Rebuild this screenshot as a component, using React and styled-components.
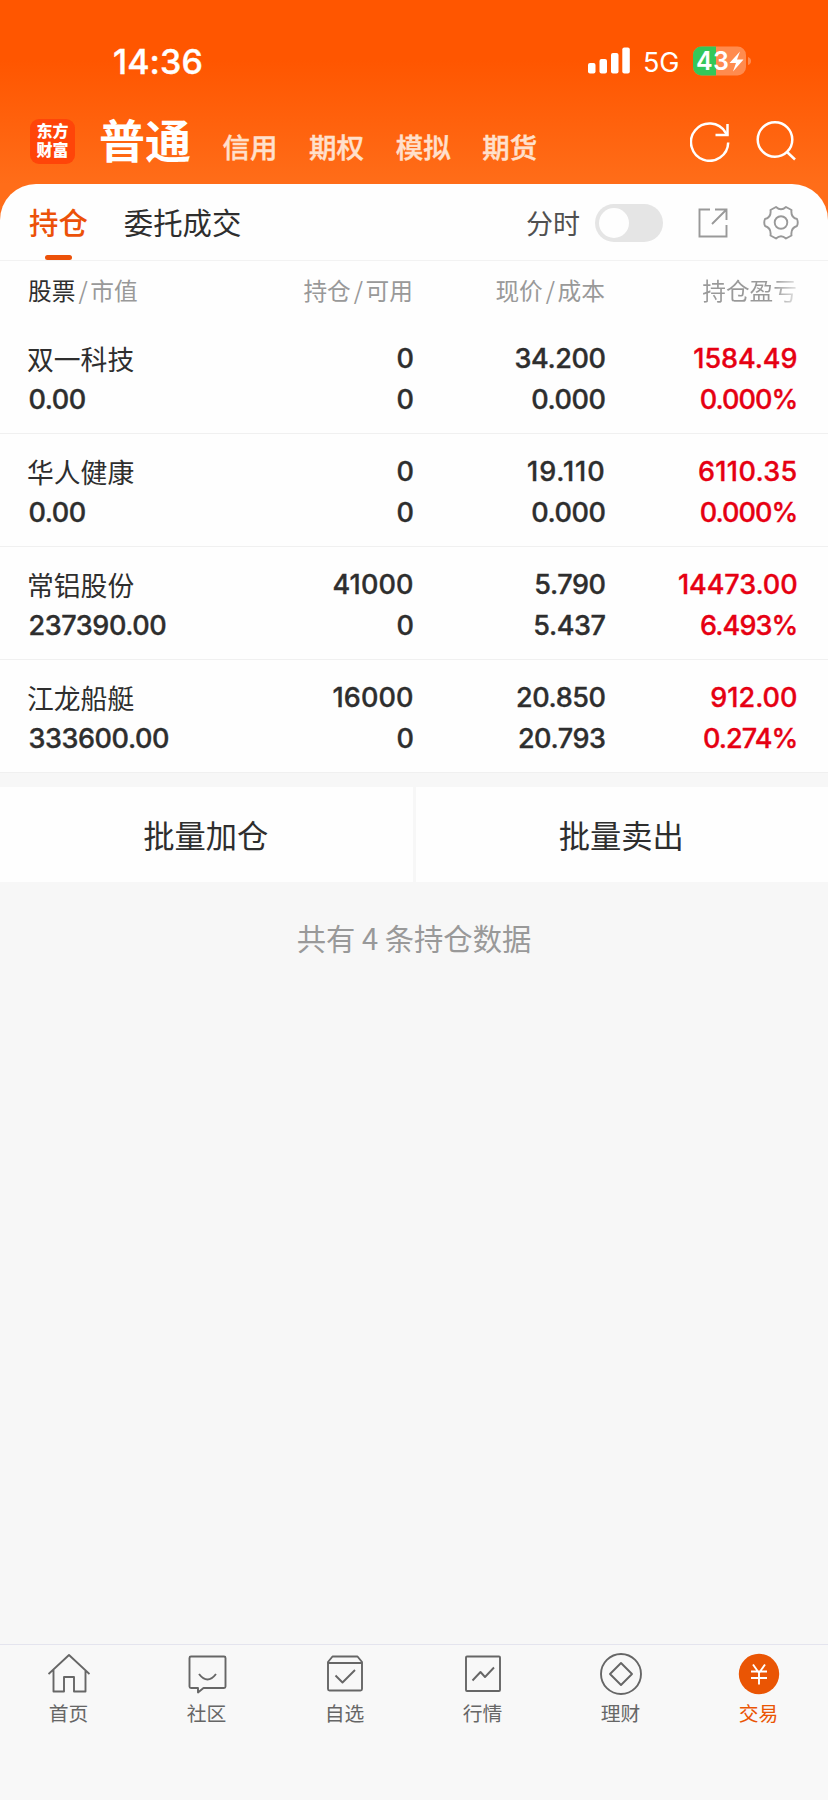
import React from 'react';
import styled, { createGlobalStyle } from 'styled-components';

const GlobalStyle = createGlobalStyle`
  * { box-sizing: border-box; }
  body { margin: 0; background: #f7f7f8; }
  #root { font-family: "Noto Sans CJK SC", sans-serif; color: #2e2e2e; }
`;

const Screen = styled.div`
  width: 828px;
  height: 1800px;
  display: flex;
  flex-direction: column;
  overflow: hidden;
  background: #f7f7f7;
`;

const Hero = styled.header`
  height: 230px;
  flex: none;
  background: linear-gradient(#ff5600 0, #ff5600 60px, #ff6d19 184px);
`;

const StatusBar = styled.div`
  height: 104px;
  padding: 17px 77px 0 113px;
  display: flex;
  align-items: center;
  color: #fff;
  font-family: Inter, sans-serif;
`;

const Clock = styled.div`
  flex: 1;
  padding-top: 2px;
  font-size: 34px;
  font-weight: 500;
  letter-spacing: 0.1px;
  -webkit-text-stroke: 0.4px currentColor;
`;

const Network = styled.div`
  margin: 4px 14px 0 12px;
  font-size: 27px;
  letter-spacing: -0.3px;
`;

const AccountBar = styled.nav`
  height: 80px;
  padding: 0 32px 0 30px;
  display: flex;
  align-items: center;
  color: #fff;
`;

const Logo = styled.div`
  width: 45px;
  height: 45px;
  margin: -5px 24px 0 0;
  padding-top: 3px;
  border-radius: 9px;
  background: #ff4509;
  font: 900 16px/19px "Liberation Sans", "Noto Sans CJK SC", sans-serif;
  text-align: center;
`;

const Account = styled.div`
  font-size: ${p => (p.$current ? '46px' : '27.5px')};
  line-height: 60px;
  font-weight: ${p => (p.$current ? 700 : 500)};
  color: ${p => (p.$current ? '#fff' : '#ffe0cc')};
  margin: ${p => (p.$current ? '-13px 31.5px 0 0' : '4px 31.6px 0 0')};
  ${p => !p.$current && '-webkit-text-stroke: 0.4px currentColor;'}
`;

const HeroActions = styled.div`
  display: flex;
  gap: 26px;
  margin: -6px 0 0 auto;
`;

const Panel = styled.main`
  flex: none;
  margin-top: -46px;
  border-radius: 36px 36px 0 0;
  background: #fefefe;
`;

const TabBar = styled.div`
  height: 77px;
  padding: 0 29px;
  display: flex;
  align-items: stretch;
  border-bottom: 1px solid #f2f2f2;
`;

const Tab = styled.div`
  margin-right: 36px;
  display: flex;
  flex-direction: column;
  align-items: center;
  font-size: 29.4px;
  line-height: 44px;
  padding-top: 15px;
  font-weight: ${p => (p.$active ? 500 : 400)};
  color: ${p => (p.$active ? '#ec5109' : '#2e2e2e')};
`;

const TabMark = styled.span`
  width: 27px;
  height: 5px;
  margin-top: auto;
  border-radius: 2.5px;
  background: #ec5109;
`;

const Tools = styled.div`
  margin-left: auto;
  padding-top: 2px;
  display: flex;
  align-items: center;
  color: #505050;
  font-size: 27px;
`;

const ToolLabel = styled.span`
  margin: -1px 0 0 -1px;
`;

const GearButton = styled.div`
  display: flex;
  margin-left: 35px;
`;

const Switch = styled.div`
  width: 68px;
  height: 38px;
  margin: 0 35px 0 15px;
  padding: 4px;
  border-radius: 19px;
  background: #e5e5e5;
  &::before {
    content: "";
    display: block;
    width: 30px;
    height: 30px;
    border-radius: 50%;
    background: #fefefe;
  }
`;

const Columns = styled.div`
  display: grid;
  grid-template-columns: 201px 184px 192px 192px;
  padding: 0 31px 0 28px;
`;

const HeadRow = styled(Columns)`
  height: 60px;
  line-height: 58px;
  font-size: 23.7px;
  color: #999;
`;

const HeadCell = styled.div`
  text-align: ${p => (p.$left ? 'left' : 'right')};
  white-space: nowrap;
  ${p => p.$fade && `
    color: transparent;
    background: linear-gradient(90deg, #999 168px, #e4e4e4 192px);
    background-clip: text;
  `}
`;

const Strong = styled.span`
  color: #2e2e2e;
`;

const Slash = styled.span`
  margin: 0 2.5px 0 3px;
`;

const Row = styled(Columns)`
  height: 113px;
  padding-top: 17px;
  border-bottom: 1px solid #f0f0f0;
`;

const Cell = styled.div`
  display: flex;
  flex-direction: column;
  align-items: ${p => (p.$left ? 'flex-start' : 'flex-end')};
  color: ${p => (p.$gain ? '#e60012' : '#2e2e2e')};
  font: 500 27px/41px Inter, sans-serif;
`;

const Figure = styled.span`
  margin: 0 -0.5px 0 0.5px;
  letter-spacing: ${p => p.$tracking}px;
  -webkit-text-stroke: 0.35px currentColor;
`;

const StockName = styled.div`
  font: 400 26.8px/41px "Noto Sans CJK SC", sans-serif;
  margin-left: -1px;
`;

const Actions = styled.div`
  display: flex;
  gap: 3px;
  padding-top: 14px;
  background: #f7f7f7;
`;

const Action = styled.div`
  flex: 1;
  height: 95px;
  padding-right: 1px;
  line-height: 96px;
  text-align: center;
  font-size: 31.3px;
  background: #fefefe;
`;

const Summary = styled.div`
  padding-top: 32px;
  text-align: center;
  font-size: 29.3px;
  line-height: 46px;
  color: #999;
`;

const BottomNav = styled.nav`
  height: 156px;
  margin-top: auto;
  display: flex;
  border-top: 1px solid #e4e4ee;
  background: #f8f8f8;
`;

const NavItem = styled.div`
  flex: 1;
  padding-top: 8px;
  display: flex;
  flex-direction: column;
  align-items: center;
  font-size: 19.8px;
  line-height: 35px;
  color: ${p => (p.$active ? '#ea5504' : '#666')};
`;

const NavLabel = styled.span`
  padding-right: 1px;
`;

const Signal = () => (
  <svg width="43" height="27" fill="#fff">
    <rect x="0" y="16" width="7.5" height="10.5" rx="2" />
    <rect x="11.5" y="12" width="7.5" height="14.5" rx="2" />
    <rect x="23" y="6" width="7.5" height="20.5" rx="2" />
    <rect x="34.3" y="0.5" width="7.5" height="26" rx="2" />
  </svg>
);

const Battery = () => (
  <svg width="58" height="30" viewBox="0 0 58 30">
    <defs><clipPath id="charge"><rect width="23" height="30" /></clipPath></defs>
    <rect x="0" y="0.5" width="53" height="29" rx="8.5" fill="#ff8b4e" />
    <rect x="0" y="0.5" width="53" height="29" rx="8.5" fill="#34c759" clipPath="url(#charge)" />
    <path d="M55 11q3 1 3 4t-3 4z" fill="#ff8b4e" />
    <text x="3" y="24" fontFamily="Inter" fontSize="25" fontWeight="600" fill="#fff" textLength="33">43</text>
    <path d="M47 5.500L36.500 17h6.500l-3 8.500L50.500 13.500h-6.500z" fill="#fff" />
  </svg>
);

const RefreshIcon = () => (
  <svg width="40" height="42" fill="none" stroke="#fff" strokeWidth="2.5">
    <path d="M38.2 22.5A18.6 18.6 0 1 1 35.500 12.500L37.500 15" />
    <path d="M37.500 4v11H25.5" />
  </svg>
);

const SearchIcon = () => (
  <svg width="40" height="42" fill="none" stroke="#fff" strokeWidth="2.5">
    <circle cx="19" cy="19.500" r="17.3" />
    <path d="M30.5 31.500L39 39.5" />
  </svg>
);

const ShareIcon = () => (
  <svg width="30" height="30" fill="none" stroke="#999" strokeWidth="1.9">
    <path d="M12 1.5H1.5v27h27V17M17 1.5h11.5V12M28 2L14 16" />
  </svg>
);

const GearIcon = () => (
  <svg width="36" height="34" viewBox="-1 0 36 34" fill="none" stroke="#999" strokeWidth="1.9" strokeLinejoin="round">
    <path d="M12 1Q17 5.500 22 1L27.500 4Q26.500 11.500 33 13Q34.500 16.500 33 20Q26.500 22 27.500 29.500L22 32.500Q17 28 12 32.500L6.500 29.500Q7.500 22 1 20Q-0.500 16.500 1 13Q7.500 11.500 6.500 4Z" />
    <circle cx="17" cy="16.500" r="6.3" />
  </svg>
);

const navIcons = {
  home: <><path d="M0 20.500L20.500 1.500l20.500 19M5 16.500v21.500h10.500V23.500h10v14.500H37V16.500" /></>,
  community: <><path d="M3 4.500q0-1.500 1.500-1.500h33q1.500 0 1.500 1.500v28.500q0 1.500-1.500 1.500H17l-5.500 4.500v-4.500h-7Q3 34.500 3 33z" /><path d="M12.500 20.500q8.500 11 17 0" /></>,
  watch: <><path d="M3.500 8.500L8 3h25l4.500 5.500v27q0 1.500-1.500 1.500H5q-1.500 0-1.500-1.500zM4 9.500h33" /><path d="M11 22l7 7L30.500 16.500" /></>,
  market: <><rect x="3.500" y="3" width="34" height="34.500" rx="1" /><path d="M10 27l8-8.500 4.500 5L31.500 14" /></>,
  wealth: <><circle cx="20.500" cy="20.500" r="20" /><path d="M20.500 9.500l11 11-11 11-11-11z" /></>,
  trade: <><circle cx="20.500" cy="20.500" r="20.200" fill="#ea5504" stroke="none" /><path d="M14.500 11l6 8.500 6-8.500M12.500 18h16M12.500 24.500h16M20.500 19v12" stroke="#fff" /></>,
};

const NavIcon = ({ name }) => (
  <svg width="42" height="42" viewBox="-0.5 -0.5 42 42" fill="none" stroke="#666" strokeWidth="1.9" strokeLinejoin="round">
    {navIcons[name]}
  </svg>
);

// Evens out the narrow "1" and the wide "%" so the figures keep a steady rhythm.
const Amount = ({ children: text }) => {
  const ones = text.split('1').length - 1;
  const percent = text.endsWith('%') ? 1 : 0;
  const tracking = -0.42 + (2.6 * ones - 2.9 * percent) / text.length;
  return <Figure $tracking={tracking.toFixed(2)}>{text}</Figure>;
};

const holdings = [
  ['双一科技', '0.00', '0', '0', '34.200', '0.000', '1584.49', '0.000%'],
  ['华人健康', '0.00', '0', '0', '19.110', '0.000', '6110.35', '0.000%'],
  ['常铝股份', '237390.00', '41000', '0', '5.790', '5.437', '14473.00', '6.493%'],
  ['江龙船艇', '333600.00', '16000', '0', '20.850', '20.793', '912.00', '0.274%'],
];

const navItems = [
  ['home', '首页'], ['community', '社区'], ['watch', '自选'],
  ['market', '行情'], ['wealth', '理财'], ['trade', '交易'],
];

export default function App() {
  return (
    <Screen>
      <GlobalStyle />
      <Hero>
        <StatusBar>
          <Clock>14:36</Clock>
          <Signal />
          <Network>5G</Network>
          <Battery />
        </StatusBar>
        <AccountBar>
          <Logo>东方<br />财富</Logo>
          <Account $current>普通</Account>
          {['信用', '期权', '模拟', '期货'].map(name => <Account key={name}>{name}</Account>)}
          <HeroActions><RefreshIcon /><SearchIcon /></HeroActions>
        </AccountBar>
      </Hero>
      <Panel>
        <TabBar>
          <Tab $active>持仓<TabMark /></Tab>
          <Tab>委托成交</Tab>
          <Tools>
            <ToolLabel>分时</ToolLabel>
            <Switch />
            <ShareIcon />
            <GearButton><GearIcon /></GearButton>
          </Tools>
        </TabBar>
        <HeadRow>
          <HeadCell $left><Strong>股票</Strong><Slash>/</Slash>市值</HeadCell>
          <HeadCell>持仓<Slash>/</Slash>可用</HeadCell>
          <HeadCell>现价<Slash>/</Slash>成本</HeadCell>
          <HeadCell $fade>持仓盈亏</HeadCell>
        </HeadRow>
        {holdings.map(([name, value, held, usable, price, cost, profit, rate]) => (
          <Row key={name}>
            <Cell $left><StockName>{name}</StockName><Amount>{value}</Amount></Cell>
            <Cell><Amount>{held}</Amount><Amount>{usable}</Amount></Cell>
            <Cell><Amount>{price}</Amount><Amount>{cost}</Amount></Cell>
            <Cell $gain><Amount>{profit}</Amount><Amount>{rate}</Amount></Cell>
          </Row>
        ))}
        <Actions>
          <Action>批量加仓</Action>
          <Action>批量卖出</Action>
        </Actions>
      </Panel>
      <Summary>共有 4 条持仓数据</Summary>
      <BottomNav>
        {navItems.map(([icon, label]) => (
          <NavItem key={icon} $active={icon === 'trade'}><NavIcon name={icon} /><NavLabel>{label}</NavLabel></NavItem>
        ))}
      </BottomNav>
    </Screen>
  );
}
